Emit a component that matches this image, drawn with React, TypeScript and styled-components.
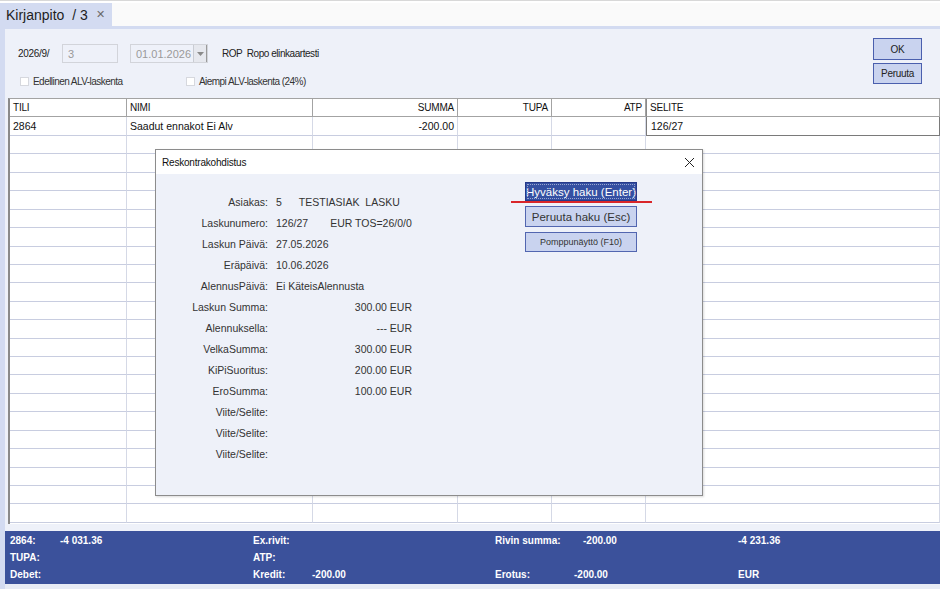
import React from "react";
import styled, { createGlobalStyle } from "styled-components";

const Global = createGlobalStyle`
  html, body { margin: 0; padding: 0; background: #ffffff; }
  body { font-family: "Liberation Sans", Arial, sans-serif; }
  * { box-sizing: border-box; }
`;

const Page = styled.div`
  position: relative;
  width: 940px;
  height: 589px;
  display: flex;
  flex-direction: column;
  overflow: hidden;
  background: #ffffff;
  border-top: 1px solid #d8d8d8;
`;

const TabBar = styled.div`
  height: 23px;
  margin-top: 2px;
  display: flex;
  background: #fafafa;
`;

const Tab = styled.div`
  width: 112px;
  background: #d3dbf1;
  display: flex;
  align-items: center;
  padding-left: 6px;
  font-size: 14px;
  color: #1e1e1e;
  white-space: pre;
`;

const TabClose = styled.span`
  margin-left: 8px;
  font-size: 11px;
  color: #6a6a6a;
`;

const TabLine = styled.div`
  height: 3px;
  background: #d3dbf1;
`;

const Frame = styled.div`
  flex: 1;
  display: flex;
  flex-direction: column;
  border-left: 5px solid #d3dbf1;
  background: #eef1f9;
`;

const Form = styled.div`
  height: 69px;
  display: flex;
  padding: 0 18px 0 13px;
`;

const FormLeft = styled.div`
  flex: 1;
  display: flex;
  flex-direction: column;
  padding-top: 15px;
`;

const FormRow = styled.div<{ $h: number; $mt?: number }>`
  height: ${(p) => p.$h}px;
  margin-top: ${(p) => p.$mt ?? 0}px;
  display: flex;
  align-items: center;
  font-size: 10px;
  color: #222;
`;

const SmallLabel = styled.span<{ $w?: number }>`
  width: ${(p) => (p.$w ? `${p.$w}px` : "auto")};
  font-size: 10px;
  letter-spacing: -0.3px;
  color: #222;
  white-space: pre;
`;

const TextBox = styled.div<{ $w: number }>`
  width: ${(p) => p.$w}px;
  height: 19px;
  border: 1px solid #d2d4da;
  background: #eef1f9;
  color: #9a9a9a;
  font-size: 11px;
  display: flex;
  align-items: center;
  padding-left: 5px;
`;

const DateBox = styled.div`
  width: 78px;
  height: 19px;
  margin-left: 12px;
  border: 1px solid #d2d4da;
  background: #eef1f9;
  color: #9a9a9a;
  font-size: 11px;
  display: flex;
  align-items: center;
  padding-left: 5px;
  justify-content: space-between;
`;

const DropBtn = styled.div`
  width: 14px;
  height: 17px;
  border-left: 1px solid #c9ccd3;
  background: #e6e8ee;
  display: flex;
  align-items: center;
  justify-content: center;
  border-right: 1px solid #9a9a9a;
`;

const OrgText = styled.span`
  margin-left: 14px;
  font-size: 10px;
  letter-spacing: -0.45px;
  color: #222;
  white-space: pre;
`;

const CheckItem = styled.label<{ $w: number }>`
  width: ${(p) => p.$w}px;
  display: flex;
  align-items: center;
  gap: 4px;
  font-size: 10px;
  letter-spacing: -0.55px;
  color: #333;
  padding-left: 2px;
`;

const CheckBox = styled.span`
  width: 9px;
  height: 9px;
  background: #fff;
  border: 1px solid #d6d8de;
  display: inline-block;
`;

const FormButtons = styled.div`
  display: flex;
  flex-direction: column;
  gap: 3px;
  padding-top: 9px;
`;

const FormButton = styled.button<{ $h: number }>`
  width: 49px;
  height: ${(p) => p.$h}px;
  background: #c9d3ef;
  border: 1px solid #4a5fae;
  font-family: "Liberation Sans", Arial, sans-serif;
  font-size: 10px;
  letter-spacing: -0.3px;
  color: #222;
  padding: 0;
`;

const GridWrap = styled.div`
  margin-left: 3px;
  height: 426px;
  border-top: 1px solid #a3a3a3;
  border-left: 2px solid #8a8a8a;
  background: #ffffff;
  display: flex;
  flex-direction: column;
  overflow: hidden;
`;

const cols = "117px 186px 145px 94px 94px 1fr";

const HeadRow = styled.div`
  display: grid;
  grid-template-columns: ${cols};
  height: 18px;
  flex: none;
`;

const HeadCell = styled.div<{ $right?: boolean; $thick?: boolean }>`
  border-right: 1px solid #a3a3a3;
  border-bottom: 1px solid #a3a3a3;
  border-left: ${(p) => (p.$thick ? "1px solid #8a8a8a" : "none")};
  font-size: 10px;
  letter-spacing: -0.2px;
  color: #111;
  display: flex;
  align-items: center;
  justify-content: ${(p) => (p.$right ? "flex-end" : "flex-start")};
  padding: 0 3px;
`;

const BodyRow = styled.div<{ $h: number }>`
  display: grid;
  grid-template-columns: ${cols};
  height: ${(p) => p.$h}px;
  flex: none;
`;

const BodyCell = styled.div<{ $right?: boolean; $edit?: boolean }>`
  border-right: 1px solid #d5d9e6;
  border-bottom: 1px solid #c8cde0;
  font-size: 10.5px;
  color: #111;
  display: flex;
  align-items: center;
  justify-content: ${(p) => (p.$right ? "flex-end" : "flex-start")};
  padding: 0 3px;
  ${(p) =>
    p.$edit
      ? `border: 1px solid #7a7a7a; border-top: none; padding-left: 4px;`
      : ""}
`;

const Footer = styled.div`
  margin-top: auto;
  height: 53px;
  background: #3b519b;
  display: grid;
  grid-template-columns: 5px 50px 193px 59px 183px 79px 164px 1fr;
  grid-template-rows: repeat(3, 17px);
  padding-top: 1px;
  color: #ffffff;
  font-size: 10px;
  font-weight: bold;
`;

const FCell = styled.div<{ $c: number; $r: number; $indent?: number }>`
  grid-column: ${(p) => p.$c};
  grid-row: ${(p) => p.$r};
  padding-left: ${(p) => p.$indent ?? 0}px;
  display: flex;
  align-items: center;
  white-space: nowrap;
`;

const BottomStrip = styled.div`
  height: 5px;
  background: #e7ebf5;
`;

/* Dialog */
const Dialog = styled.div`
  position: absolute;
  left: 155px;
  top: 148px;
  width: 548px;
  height: 347px;
  border: 1px solid #8c8c8c;
  background: #eef1f9;
  display: flex;
  flex-direction: column;
  box-shadow: 1px 1px 2px rgba(0, 0, 0, 0.15);
`;

const DialogTitle = styled.div`
  height: 24px;
  background: #ffffff;
  display: flex;
  align-items: center;
  justify-content: space-between;
  padding: 0 7px 0 6px;
  font-size: 10px;
  letter-spacing: -0.2px;
  color: #111;
`;

const DialogBody = styled.div`
  flex: 1;
  display: flex;
  padding-top: 8px;
`;

const InfoGrid = styled.div`
  width: 369px;
  margin-top: 9px;
  display: grid;
  grid-template-columns: 120px 136px;
  grid-auto-rows: 21px;
  align-content: start;
  font-size: 10.5px;
  color: #333;
`;

const InfoLabel = styled.div`
  padding-right: 8px;
  display: flex;
  align-items: center;
  justify-content: flex-end;
  white-space: nowrap;
`;

const InfoValue = styled.div<{ $right?: boolean }>`
  display: flex;
  align-items: center;
  justify-content: ${(p) => (p.$right ? "flex-end" : "flex-start")};
  white-space: pre;
`;

const Gap = styled.span<{ $w: number }>`
  display: inline-block;
  width: ${(p) => p.$w}px;
`;

const ButtonCol = styled.div`
  position: relative;
  width: 112px;
  display: flex;
  flex-direction: column;
  gap: 5px;
`;

const DlgButton = styled.button<{ $h: number; $primary?: boolean; $small?: boolean }>`
  width: 112px;
  height: ${(p) => p.$h}px;
  padding: 0;
  font-family: "Liberation Sans", Arial, sans-serif;
  font-size: ${(p) => (p.$small ? "9px" : "11.5px")};
  color: ${(p) => (p.$primary ? "#ffffff" : "#333")};
  background: ${(p) => (p.$primary ? "#3550a2" : "#c9d3ef")};
  border: 1px solid ${(p) => (p.$primary ? "#25398a" : "#5266b0")};
  outline: ${(p) => (p.$primary ? "1px dotted #9aa6d0" : "none")};
  outline-offset: -3px;
`;

const RedLine = styled.div`
  position: absolute;
  left: -14px;
  top: 19px;
  width: 141px;
  height: 2px;
  background: #d9262a;
`;

const emptyRows = Array.from({ length: 21 });

const infoRows: { label: string; value?: React.ReactNode; right?: boolean }[] = [
  { label: "Asiakas:", value: <>5<Gap $w={17} />TESTIASIAK  LASKU</> },
  { label: "Laskunumero:", value: <>126/27<Gap $w={22} />EUR TOS=26/0/0</> },
  { label: "Laskun Päivä:", value: "27.05.2026" },
  { label: "Eräpäivä:", value: "10.06.2026" },
  { label: "AlennusPäivä:", value: "Ei KäteisAlennusta" },
  { label: "Laskun Summa:", value: "300.00 EUR", right: true },
  { label: "Alennuksella:", value: "--- EUR", right: true },
  { label: "VelkaSumma:", value: "300.00 EUR", right: true },
  { label: "KiPiSuoritus:", value: "200.00 EUR", right: true },
  { label: "EroSumma:", value: "100.00 EUR", right: true },
  { label: "Viite/Selite:" },
  { label: "Viite/Selite:" },
  { label: "Viite/Selite:" },
];

export default function App() {
  return (
    <Page>
      <Global />
      <TabBar>
        <Tab>
          Kirjanpito  / 3<TabClose>✕</TabClose>
        </Tab>
      </TabBar>
      <TabLine />
      <Frame>
        <Form>
          <FormLeft>
            <FormRow $h={19}>
              <SmallLabel $w={44}>2026/9/</SmallLabel>
              <TextBox $w={56}>3</TextBox>
              <DateBox>
                01.01.2026
                <DropBtn>
                  <svg width="7" height="4" viewBox="0 0 7 4">
                    <path d="M0 0 L7 0 L3.5 4 Z" fill="#8a8a8a" />
                  </svg>
                </DropBtn>
              </DateBox>
              <OrgText>ROP  Ropo elinkaartesti</OrgText>
            </FormRow>
            <FormRow $h={24} $mt={6}>
              <CheckItem $w={166}>
                <CheckBox />
                Edellinen ALV-laskenta
              </CheckItem>
              <CheckItem $w={160}>
                <CheckBox />
                Aiempi ALV-laskenta (24%)
              </CheckItem>
            </FormRow>
          </FormLeft>
          <FormButtons>
            <FormButton $h={22}>OK</FormButton>
            <FormButton $h={21}>Peruuta</FormButton>
          </FormButtons>
        </Form>

        <GridWrap>
          <HeadRow>
            <HeadCell>TILI</HeadCell>
            <HeadCell>NIMI</HeadCell>
            <HeadCell $right>SUMMA</HeadCell>
            <HeadCell $right>TUPA</HeadCell>
            <HeadCell $right>ATP</HeadCell>
            <HeadCell $thick>SELITE</HeadCell>
          </HeadRow>
          <BodyRow $h={19}>
            <BodyCell>2864</BodyCell>
            <BodyCell>Saadut ennakot Ei Alv</BodyCell>
            <BodyCell $right>-200.00</BodyCell>
            <BodyCell />
            <BodyCell />
            <BodyCell $edit>126/27</BodyCell>
          </BodyRow>
          {emptyRows.map((_, i) => (
            <BodyRow key={i} $h={18.43}>
              <BodyCell />
              <BodyCell />
              <BodyCell />
              <BodyCell />
              <BodyCell />
              <BodyCell />
            </BodyRow>
          ))}
        </GridWrap>

        <Footer>
          <FCell $c={2} $r={1}>2864:</FCell>
          <FCell $c={3} $r={1}>-4 031.36</FCell>
          <FCell $c={4} $r={1}>Ex.rivit:</FCell>
          <FCell $c={6} $r={1}>Rivin summa:</FCell>
          <FCell $c={7} $r={1} $indent={9}>-200.00</FCell>
          <FCell $c={8} $r={1}>-4 231.36</FCell>
          <FCell $c={2} $r={2}>TUPA:</FCell>
          <FCell $c={4} $r={2}>ATP:</FCell>
          <FCell $c={2} $r={3}>Debet:</FCell>
          <FCell $c={4} $r={3}>Kredit:</FCell>
          <FCell $c={5} $r={3}>-200.00</FCell>
          <FCell $c={6} $r={3}>Erotus:</FCell>
          <FCell $c={7} $r={3}>-200.00</FCell>
          <FCell $c={8} $r={3}>EUR</FCell>
        </Footer>
        <BottomStrip />
      </Frame>

      <Dialog>
        <DialogTitle>
          Reskontrakohdistus
          <svg width="11" height="11" viewBox="0 0 11 11">
            <path d="M1 1 L10 10 M10 1 L1 10" stroke="#222" strokeWidth="1" />
          </svg>
        </DialogTitle>
        <DialogBody>
          <InfoGrid>
            {infoRows.map((r, i) => (
              <React.Fragment key={i}>
                <InfoLabel>{r.label}</InfoLabel>
                <InfoValue $right={r.right}>{r.value ?? ""}</InfoValue>
              </React.Fragment>
            ))}
          </InfoGrid>
          <ButtonCol>
            <DlgButton $h={19} $primary>Hyväksy haku (Enter)</DlgButton>
            <DlgButton $h={21}>Peruuta haku (Esc)</DlgButton>
            <DlgButton $h={20} $small>Pomppunäyttö (F10)</DlgButton>
            <RedLine />
          </ButtonCol>
        </DialogBody>
      </Dialog>
    </Page>
  );
}
